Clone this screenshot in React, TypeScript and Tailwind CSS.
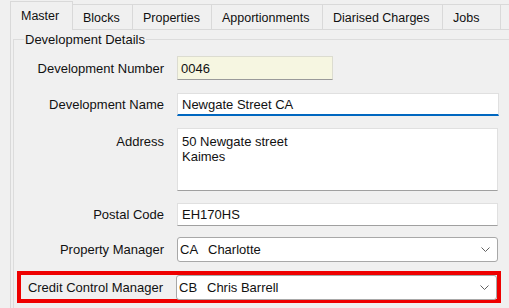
import React from 'react';

const tabs = [
  { label: 'Master', width: 'w-[63px]' },
  { label: 'Blocks', width: 'w-[60px]' },
  { label: 'Properties', width: 'w-[80px]' },
  { label: 'Apportionments', width: 'w-[112px]' },
  { label: 'Diarised Charges', width: 'w-[121px]' },
  { label: 'Jobs', width: 'w-[59px]' },
];

function Chevron() {
  return (
    <svg width="9" height="5" viewBox="0 0 9 5" className="shrink-0">
      <polyline points="0.5,0.5 4.5,4.5 8.5,0.5" fill="none" stroke="#606060" strokeWidth="1" />
    </svg>
  );
}

function Combo({ code, name, width }: { code: string; name: string; width: string }) {
  return (
    <div className={`${width} h-[25px] flex items-center bg-white border border-[#a8a8a8] rounded-[3px] pl-[2px] pr-[7px]`}>
      <span className="w-[28px]">{code}</span>
      <span className="flex-1">{name}</span>
      <Chevron />
    </div>
  );
}

export default function App() {
  return (
    <div
      className="w-[509px] h-[308px] overflow-hidden bg-[#f0f0f0] flex flex-col text-[13px] leading-[15px] text-[#111]"
      style={{ fontFamily: '"Liberation Sans", Arial, sans-serif' }}
    >
      {/* tab strip */}
      <div className="h-[29px] flex items-end pl-[10px] shrink-0 text-[12.5px]">
        {tabs.map((t, i) =>
          i === 0 ? (
            <div
              key={t.label}
              className={`${t.width} shrink-0 h-[29px] -mb-px relative z-10 bg-[#f0f0f0] border border-b-0 border-[#d9d9d9] pl-[10px] pt-[7px]`}
            >
              {t.label}
            </div>
          ) : (
            <div
              key={t.label}
              className={`${t.width} shrink-0 h-[25px] border border-b-0 border-[#d9d9d9] pl-[10px] pt-[6px] whitespace-nowrap ${i === 1 ? 'border-l-0' : '-ml-px'}`}
            >
              {t.label}
            </div>
          )
        )}
        <div className="w-[40px] h-[25px] -ml-px border border-b-0 border-[#d9d9d9] shrink-0" />
      </div>

      {/* tab page */}
      <div className="flex-1 ml-[10px] border-t border-l border-[#d9d9d9]">
        <div className="ml-[2px] mt-[9px] border-t border-l border-[#dcdcdc] h-[400px]">
          <div className="-mt-[8px] ml-[10px] w-fit px-[1px] bg-[#f0f0f0]">Development Details</div>

          <div className="flex items-center mt-[9px]">
            <div className="w-[150px] text-right">Development Number</div>
            <div className="ml-[13px] w-[156px] h-[24px] bg-[#f6f6e1] border border-[#dcdcd0] border-b-[#9a9a9a] pl-[3px] flex items-center">
              0046
            </div>
          </div>

          <div className="flex items-center mt-[13px]">
            <div className="w-[150px] text-right">Development Name</div>
            <div className="ml-[13px] w-[322px] h-[23px] bg-white border border-[#e0e0e0] border-b-2 border-b-[#0067c0] pl-[4px] flex items-center">
              Newgate Street CA
            </div>
          </div>

          <div className="flex items-start mt-[12px]">
            <div className="w-[150px] text-right pt-[6px]">Address</div>
            <div className="ml-[13px] w-[321px] h-[63px] bg-white border border-[#e0e0e0] border-b-[#a0a0a0] pl-[4px] pt-[5px]">
              <div>50 Newgate street</div>
              <div>Kaimes</div>
            </div>
          </div>

          <div className="flex items-center mt-[12px]">
            <div className="w-[150px] text-right">Postal Code</div>
            <div className="ml-[13px] w-[321px] h-[23px] bg-white border border-[#e0e0e0] border-b-[#a0a0a0] pl-[4px] flex items-center">
              EH170HS
            </div>
          </div>

          <div className="flex items-center mt-[11px]">
            <div className="w-[150px] text-right">Property Manager</div>
            <div className="ml-[13px]">
              <Combo code="CA" name="Charlotte" width="w-[321px]" />
            </div>
          </div>

          <div className="flex items-center mt-[9px] ml-[3px] w-[484px] h-[32px] border-4 border-[#ee0000]">
            <div className="w-[143px] text-right">Credit Control Manager</div>
            <div className="ml-[13px]">
              <Combo code="CB" name="Chris Barrell" width="w-[321px]" />
            </div>
          </div>
        </div>
      </div>
    </div>
  );
}
